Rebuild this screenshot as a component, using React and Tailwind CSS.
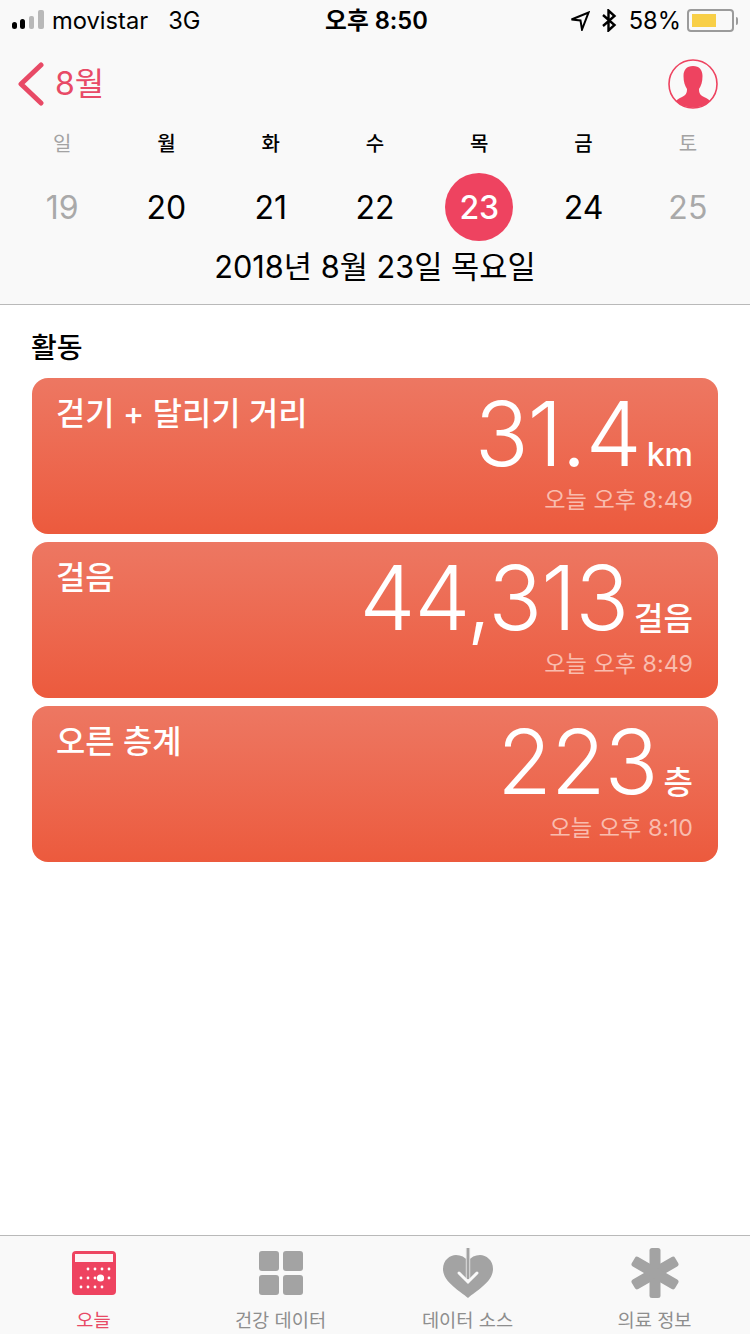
import React from 'react';

const FONT = "font-['Inter','Noto_Sans_CJK_KR',sans-serif]";

const DAYS = [
  { label: '일', date: '19', off: true },
  { label: '월', date: '20' },
  { label: '화', date: '21' },
  { label: '수', date: '22' },
  { label: '목', date: '23', active: true },
  { label: '금', date: '24' },
  { label: '토', date: '25', off: true },
];

const CARDS = [
  { title: '걷기 + 달리기 거리', value: '31.4', unit: 'km', time: '오늘 오후 8:49' },
  { title: '걸음', value: '44,313', unit: '걸음', time: '오늘 오후 8:49' },
  { title: '오른 층계', value: '223', unit: '층', time: '오늘 오후 8:10' },
];

function SignalIcon() {
  return (
    <svg width="34" height="22" viewBox="0 0 34 22">
      <rect x="0" y="12" width="5" height="7" rx="2.5" fill="#000" />
      <rect x="8" y="9" width="5" height="10" rx="2.5" fill="#000" />
      <rect x="17" y="6" width="5" height="13" rx="2" fill="#b8b8b8" />
      <rect x="26" y="0" width="6" height="19" rx="2" fill="#b8b8b8" />
    </svg>
  );
}

function TodayIcon() {
  const rows = [
    [[87, 1270], [94, 1270], [101, 1270], [108, 1270]],
    [[80, 1279], [87, 1279], [94, 1279], [108, 1279]],
    [[80, 1288], [87, 1288], [94, 1288], [101, 1288]],
  ];
  return (
    <svg width="44" height="44" viewBox="71 1252 44 44">
      <rect x="71" y="1252" width="44" height="44" rx="4" fill="#ee4360" />
      <rect x="74" y="1255" width="38" height="8" fill="#fdf3f5" />
      {rows.flat().map(([x, y]) => (
        <circle key={`${x}-${y}`} cx={x} cy={y} r="1.4" fill="#fff" />
      ))}
      <circle cx="99.5" cy="1279" r="3.6" fill="#fff" />
    </svg>
  );
}

function GridIcon() {
  return (
    <svg width="44" height="44" viewBox="0 0 44 44" fill="#a3a3a3">
      <rect x="0" y="0" width="20" height="20" rx="3" />
      <rect x="24" y="0" width="20" height="20" rx="3" />
      <rect x="0" y="24" width="20" height="20" rx="3" />
      <rect x="24" y="24" width="20" height="20" rx="3" />
    </svg>
  );
}

function HeartIcon() {
  return (
    <svg width="52" height="52" viewBox="0 0 52 52">
      <path d="M26 51 C18 44 1 35 1 22 C1 13 8 8 14 8 C19 8 23 10 26 14 C29 10 33 8 38 8 C44 8 51 13 51 22 C51 35 34 44 26 51 Z" fill="#a3a3a3" />
      <path d="M26 1 V34" stroke="#e4e4e4" strokeWidth="4.4" fill="none" />
      <path d="M26 1 V32" stroke="#a3a3a3" strokeWidth="2.6" fill="none" />
      <path d="M17 26 L26 35 L35 26" stroke="#fafafa" strokeWidth="3" fill="none" strokeLinecap="round" />
    </svg>
  );
}

function StarIcon() {
  return (
    <svg width="50" height="50" viewBox="0 0 50 50" fill="#a3a3a3">
      <rect x="19.5" y="0" width="11" height="50" rx="2.5" />
      <rect x="19.5" y="0" width="11" height="50" rx="2.5" transform="rotate(60 25 25)" />
      <rect x="19.5" y="0" width="11" height="50" rx="2.5" transform="rotate(-60 25 25)" />
    </svg>
  );
}

const TABS = [
  { label: '오늘', icon: <TodayIcon />, active: true },
  { label: '건강 데이터', icon: <GridIcon /> },
  { label: '데이터 소스', icon: <HeartIcon /> },
  { label: '의료 정보', icon: <StarIcon /> },
];

export default function App() {
  return (
    <div className={`${FONT} w-[750px] h-[1334px] flex flex-col bg-white text-black overflow-hidden`}>
      <header className="bg-[#f9f9f9] border-b border-[#b9b9b9] h-[305px] shrink-0">
        {/* Status bar */}
        <div className="h-[42px] px-[12px] flex items-center justify-between text-[23.7px] leading-none">
          <div className="w-[300px] flex items-center">
            <SignalIcon />
            <span className="ml-[6px]">movistar</span>
            <span className="ml-[20px]">3G</span>
          </div>
          <span className="ml-[3px] font-semibold">오후 8:50</span>
          <div className="w-[300px] flex items-center justify-end">
            <svg width="20" height="20" viewBox="0 0 20 20" fill="none" stroke="#000" strokeWidth="2" strokeLinejoin="miter">
              <path d="M1.5 8.5 L18.5 1.5 L12 18.5 L10.5 9.5 Z" />
            </svg>
            <svg className="ml-[11px]" width="16" height="23" viewBox="0 0 16 23" fill="none" stroke="#000" strokeWidth="2.4">
              <path d="M2 6 L13.5 16 L7.5 21.5 V1.5 L13.5 7 L2 17" />
            </svg>
            <span className="ml-[12px]">58%</span>
            <div className="ml-[6px] w-[47px] h-[23px] rounded-[4px] border-2 border-[#9b9b9b] p-[3px]">
              <div className="w-[24px] h-full bg-[#f8cf47]" />
            </div>
            <div className="ml-[2px] w-[2px] h-[8px] bg-[#9b9b9b] rounded-r" />
          </div>
        </div>

        {/* Month row */}
        <div className="h-[84px] pl-[18px] pr-[32px] flex items-start justify-between">
          <div className="flex items-center text-[#e84a66] pt-[20px]">
            <svg width="26" height="44" viewBox="0 0 26 44" fill="none" stroke="#e84a66" strokeWidth="5" strokeLinecap="round" strokeLinejoin="round">
              <path d="M23 3 L3 22 L23 41" />
            </svg>
            <span className="ml-[11px] text-[32px] leading-[40px]">8월</span>
          </div>
          <svg className="mt-[17px]" width="50" height="50" viewBox="0 0 50 50">
            <circle cx="25" cy="25" r="24" fill="none" stroke="#ee4360" strokeWidth="1.6" />
            <path d="M25 7 C18.5 7 15.5 11 15.5 17 C15.5 23 17 27 19 30 C19 34 18 36 14 38 C11 39.5 9 40.5 8 42 C12 46 18 48.5 25 48.5 C32 48.5 38 46 42 42 C41 40.5 39 39.5 36 38 C32 36 31 34 31 30 C33 27 34.5 23 34.5 17 C34.5 11 31.5 7 25 7 Z" fill="#ee4360" />
          </svg>
        </div>

        {/* Week */}
        <div className="grid grid-cols-7 px-[10px] text-center">
          {DAYS.map(d => (
            <div key={d.label} className="flex flex-col items-center">
              <span className={`h-[34px] text-[20px] leading-[36px] ${d.off ? 'text-[#a3a3a3]' : 'font-medium'}`}>{d.label}</span>
              <div className={`mt-[13px] pt-[1px] w-[68px] h-[68px] rounded-full flex items-center justify-center text-[32px] leading-none ${d.active ? 'bg-[#ee4360] text-white font-medium' : d.off ? 'text-[#a9a9a9]' : ''}`}>
                {d.date}
              </div>
            </div>
          ))}
        </div>
        <div className="mt-[6px] text-center text-[30.7px] leading-[40px]">2018년 8월 23일 목요일</div>
      </header>

      <main className="flex-1 px-[32px]">
        <h2 className="mt-[23px] -ml-[1px] text-[28px] leading-[40px] font-medium">활동</h2>
        <div className="mt-[10px] flex flex-col gap-[8px]">
          {CARDS.map(c => (
            <div key={c.title} className="h-[156px] rounded-[16px] bg-gradient-to-b from-[#ed7762] to-[#ec5a3d] pl-[24px] pr-[25px] flex justify-between text-white">
              <span className="mt-[15px] text-[31.8px] leading-[42px] font-medium">{c.title}</span>
              <div className="flex flex-col items-end">
                <div className="flex items-baseline h-[106px]">
                  <span className="text-[89px] leading-[112px] font-light tracking-[-1px]">{c.value}</span>
                  <span className="ml-[6px] text-[32px] leading-none font-medium">{c.unit}</span>
                </div>
                <span className="text-[23.2px] leading-[32px] text-[#f9bcae]">{c.time}</span>
              </div>
            </div>
          ))}
        </div>
      </main>

      <nav className="h-[99px] shrink-0 bg-[#f9f9f9] border-t border-[#b9b9b9] grid grid-cols-4 pr-[2px]">
        {TABS.map(t => (
          <div key={t.label} className="flex flex-col items-center">
            <div className="h-[54px] mt-[10px] flex items-center justify-center">{t.icon}</div>
            <span className={`mt-[8px] text-[18.7px] leading-[26px] ${t.active ? 'text-[#e84a66]' : 'text-[#8e8e8e]'}`}>{t.label}</span>
          </div>
        ))}
      </nav>
    </div>
  );
}
